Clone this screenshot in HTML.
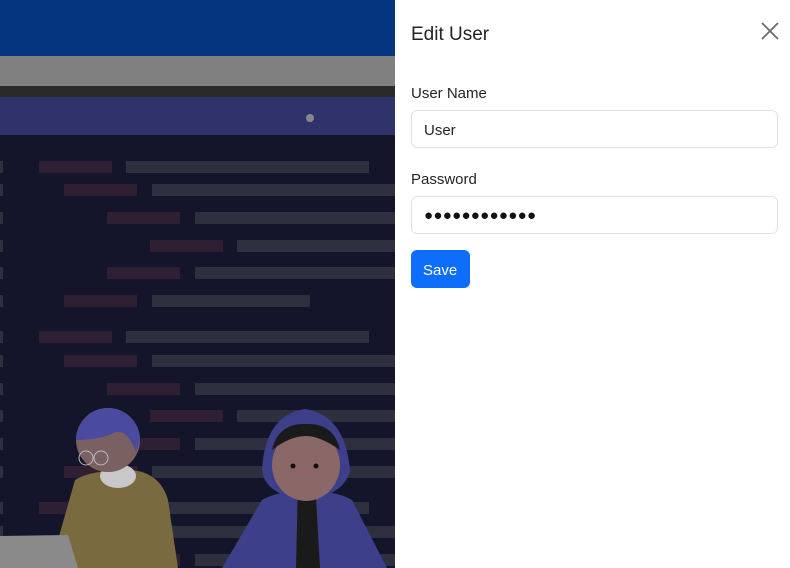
<!DOCTYPE html>
<html><head><style>
*{margin:0;padding:0;box-sizing:border-box}
body{width:790px;height:568px;overflow:hidden;position:relative;background:#14152a;font-family:"Liberation Sans",sans-serif}
.l{position:absolute;left:0;top:0;width:395px;height:568px;overflow:hidden;background:#14152a}
.b{position:absolute;height:12px}
.r{background:#2f1f33}.g{background:#2e303f}
.p{position:absolute;left:395px;top:0;width:395px;height:568px;background:#fff;color:#212529;font-family:"Liberation Sans",sans-serif}
h5{position:absolute;left:16px;top:24px;font-size:19px;font-weight:400}
.lab{position:absolute;left:16px;font-size:15px}
.in{position:absolute;left:16px;width:367px;height:38px;border:1px solid #dee2e6;border-radius:6px;font-size:15px;padding:11px 12px}
.btn{position:absolute;left:16px;top:250px;width:59px;height:38px;background:#0d6efd;color:#fff;border-radius:6px;font-size:15px;padding:12px 12px}
</style></head><body>
<div class="l">
<div style="position:absolute;left:0;top:0;width:395px;height:56px;background:#063580"></div>
<div style="position:absolute;left:0;top:56px;width:395px;height:30px;background:#808080"></div>
<div style="position:absolute;left:0;top:86px;width:395px;height:11px;background:#2a2a2a"></div>
<div style="position:absolute;left:0;top:97px;width:395px;height:38px;background:#30336b"></div>
<div style="position:absolute;left:306px;top:114px;width:8px;height:8px;border-radius:50%;background:#888"></div>
<div id="bars"></div>
<svg width="395" height="568" style="position:absolute;left:0;top:0">
<path d="M50 568 L75 480 Q90 470 130 470 Q160 472 168 500 L178 568 Z" fill="#7a6a40"/>
<ellipse cx="118" cy="476" rx="18" ry="12" fill="#c8c8c8"/>
<circle cx="108" cy="440" r="32" fill="#7a6060"/>
<path d="M76 440 A32 32 0 0 1 140 440 L136 452 Q128 430 116 432 Q100 440 76 440Z" fill="#4a4a9e"/>
<circle cx="86" cy="458" r="7" fill="none" stroke="#bbb" stroke-width="1"/>
<circle cx="101" cy="458" r="7" fill="none" stroke="#bbb" stroke-width="1"/>
<path d="M0 536 L68 535 L78 568 L0 568Z" fill="#8a8a8a"/>
<path d="M222 568 L262 500 Q280 490 305 492 Q335 490 352 500 L387 568Z" fill="#3e3f8a"/>
<path d="M298 480 L315 480 L320 568 L296 568Z" fill="#1a1a1a"/>
<path d="M262 470 Q265 415 305 409 Q345 415 350 470 Q345 495 305 500 Q265 495 262 470Z" fill="#3e3f8a"/>
<ellipse cx="306" cy="465" rx="34" ry="36" fill="#8a6868"/>
<path d="M272 450 Q278 423 306 424 Q334 423 340 450 Q320 436 306 436 Q290 436 272 450Z" fill="#1a1a1a"/>
<circle cx="293" cy="466" r="2.5" fill="#111"/><circle cx="316" cy="466" r="2.5" fill="#111"/>
</svg>
</div>
<script>
var rows=[[161,39,126,369],[184,64,152,395],[212,107,195,395],[240,150,237,395],[267,107,195,395],[295,64,152,310],[331,39,126,369],[355,64,152,395],[383,107,195,395],[410,150,237,395],[438,107,195,395],[466,64,152,395],[502,39,126,369],[526,64,152,395],[554,107,195,395]];
var h='';rows.forEach(function(r){h+='<div class="b g" style="top:'+r[0]+'px;left:0;width:3px"></div><div class="b r" style="top:'+r[0]+'px;left:'+r[1]+'px;width:73px"></div><div class="b g" style="top:'+r[0]+'px;left:'+r[2]+'px;width:'+(r[3]-r[2])+'px"></div>'});
document.getElementById('bars').innerHTML=h;
</script>
<div class="p">
<h5>Edit User</h5>
<svg width="18" height="18" style="position:absolute;left:366px;top:22px"><path d="M1 1L17 17M17 1L1 17" stroke="#6c6c6c" stroke-width="1.8"/></svg>
<div class="lab" style="top:85px">User Name</div>
<div class="in" style="top:110px">User</div>
<div class="lab" style="top:171px">Password</div>
<div class="in" style="top:196px;letter-spacing:0.3px;font-size:15px;padding-top:10px;color:#111">●●●●●●●●●●●●</div>
<div class="btn">Save</div>
</div>
</body></html>
